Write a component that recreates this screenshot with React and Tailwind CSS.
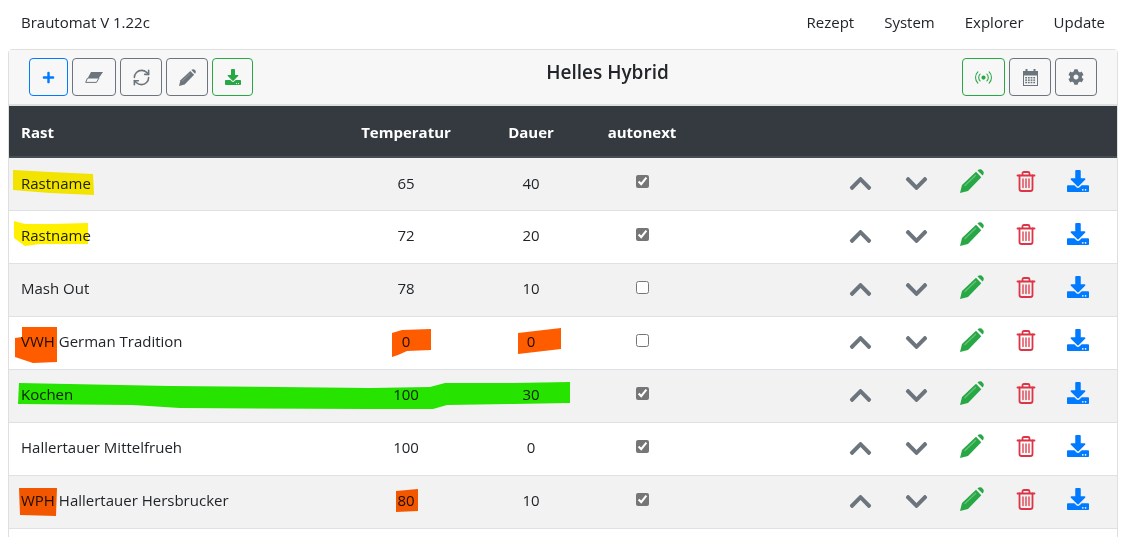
import { FaPlus, FaDownload, FaCog, FaChevronUp, FaChevronDown } from "react-icons/fa";
import { BsBroadcast } from "react-icons/bs";
import { RefreshCw } from "lucide-react";

const rows = [
	{ name: "Rastname", temp: 65, time: 40, auto: true },
	{ name: "Rastname", temp: 72, time: 20, auto: true },
	{ name: "Mash Out", temp: 78, time: 10, auto: false },
	{ name: "VWH German Tradition", temp: 0, time: 0, auto: false },
	{ name: "Kochen", temp: 100, time: 30, auto: true },
	{ name: "Hallertauer Mittelfrueh", temp: 100, time: 0, auto: true },
	{ name: "WPH Hallertauer Hersbrucker", temp: 80, time: 10, auto: true },
];

// marker scribbles somebody drew on top of the screenshot
const marks = [
	{ color: "#fff000", points: "13,170 50,172 93,174 94,195 50,193 13,190" },
	{ color: "#fff000", points: "14,221 25,224 50,224 88,223 88,244 40,244 25,246 14,238" },
	{ color: "#ff5c00", points: "22,327 57,327 57,362 33,363 15,357 15,338 22,337" },
	{ color: "#ff5c00", points: "392,333 402,330 431,329 431,350 407,351 398,355 392,357" },
	{ color: "#ff5c00", points: "518,333 561,328 561,349 518,354" },
	{ color: "#28f000", points: "19,383 170,386 370,388 430,387 445,383 513,383 570,382 570,403 513,404 447,405 433,409 370,409 180,408 133,405 18,404" },
	{ color: "#ff5c00", points: "19,488 57,488 56,516 20,515" },
	{ color: "#ff5c00", points: "396,491 418,489 418,511 396,512" },
];

const Pencil = ({ size }) => (
	<svg width={size} height={size} viewBox="0 0 24 24" fill="currentColor">
		<path d="M0 24 L2 16 L16 2.8 L21.3 8.2 L8 22 Z" />
		<path d="M17.5 1.5 Q19.5 -0.5 21.5 0.6 L23.2 2.2 Q24.5 4.2 22.6 6.6 Z" />
		<path d="M4.5 17 L16 6" stroke="#fff" strokeOpacity="0.3" strokeWidth="1.2" />
	</svg>
);

const Trash = () => (
	<svg width="20" height="21" viewBox="0 0 19 21" fill="none" stroke="currentColor" strokeWidth="1.8" strokeLinecap="round">
		<path d="M1 4.5 H18" />
		<path d="M6 4 V2.5 Q6 1 7.5 1 H11.5 Q13 1 13 2.5 V4" />
		<path d="M3 4.5 V18 Q3 20 5 20 H14 Q16 20 16 18 V4.5" />
		<path d="M6.5 8 V16.5 M9.5 8 V16.5 M12.5 8 V16.5" strokeWidth="1.3" />
	</svg>
);

const Eraser = () => (
	<svg width="18" height="11" viewBox="0 0 18 11">
		<path d="M6 0 H18 L13.5 6.5 H2.5 Z" fill="currentColor" />
		<path d="M2.5 6 L0.7 10.4 H11.5 L14 6" fill="none" stroke="currentColor" strokeWidth="1" />
	</svg>
);

const CalendarIcon = () => {
	const cells = [];
	for (let y = 8; y < 15; y += 2.4) {
		for (let x = 2.2; x < 12; x += 2.7) {
			cells.push(<rect key={`${x}-${y}`} x={x} y={y} width="1.8" height="1.5" fill="currentColor" />);
		}
	}
	return (
		<svg width="15" height="17" viewBox="0 0 15 17">
			<path d="M0 2 H2.5 V0 H4.5 V2 H10.5 V0 H12.5 V2 H15 V6.5 H0 Z" fill="currentColor" />
			<rect x="0.5" y="6" width="14" height="10.5" fill="#f7f7f7" stroke="currentColor" />
			{cells}
		</svg>
	);
};

const ToolButton = ({ className, children }) => (
	<button type="button" className={`flex items-center justify-center h-[38px] border rounded ${className}`}>
		{children}
	</button>
);

const Row = ({ row, index }) => (
	<tr className={`h-[53px] border-b border-[#dee2e6] ${index % 2 === 0 ? "bg-[#f2f2f2]" : "bg-white"}`}>
		<td className="pl-3 pb-[2px]">{row.name}</td>
		<td className="pb-[2px] text-center">{row.temp}</td>
		<td className="pb-[2px] text-center">{row.time}</td>
		<td>
			<input type="checkbox" defaultChecked={row.auto} className="block mx-auto mb-[5px] accent-[#767676]" />
		</td>
		<td />
		<td><div className="flex justify-center text-[#6c757d] text-[25px]"><FaChevronUp /></div></td>
		<td><div className="flex justify-center text-[#6c757d] text-[25px]"><FaChevronDown /></div></td>
		<td><div className="flex justify-center pb-[5px] text-[#28a745]"><Pencil size={24} /></div></td>
		<td><div className="flex justify-center pb-[4px] text-[#dc3545]"><Trash /></div></td>
		<td className="pr-3"><div className="flex justify-center pb-[6px] text-[#007bff] text-[22px]"><FaDownload /></div></td>
	</tr>
);

const App = () => {
	return (
		<div className="relative h-[537px] overflow-hidden bg-white text-[15px] text-[#212529] font-['Open_Sans',sans-serif]">
			<nav className="flex items-center justify-between h-[45px] pl-[21px] pr-[25px]">
				<span>Brautomat V 1.22c</span>
				<div className="flex gap-[30px]">
					<a>Rezept</a>
					<a>System</a>
					<a>Explorer</a>
					<a>Update</a>
				</div>
			</nav>

			<div className="mx-2 mt-1 w-[1110px] h-[600px] border border-[#dfdfdf] rounded-t">
				<div className="flex items-center h-[56px] px-5 bg-[#f7f7f7] border-b-2 border-[#dfdfdf]">
					<div className="flex gap-1 w-[389px]">
						<ToolButton className="w-[39px] border-[#007bff] text-[#007bff]"><FaPlus className="text-[13px]" /></ToolButton>
						<ToolButton className="w-[44px] border-[#6c757d] text-[#6c757d]"><Eraser /></ToolButton>
						<ToolButton className="w-[42px] border-[#6c757d] text-[#6c757d]"><RefreshCw size={19} strokeWidth={2} /></ToolButton>
						<ToolButton className="w-[42px] border-[#6c757d] text-[#6c757d]"><Pencil size={17} /></ToolButton>
						<ToolButton className="w-[41px] border-[#28a745] text-[#28a745]"><FaDownload className="text-[16px]" /></ToolButton>
					</div>
					<h1 className="flex-1 mb-2.5 text-center text-[19px] font-semibold">Helles Hybrid</h1>
					<div className="flex justify-end gap-1 w-[300px]">
						<ToolButton className="w-[43px] border-[#28a745] text-[#28a745]"><BsBroadcast className="text-[17px]" /></ToolButton>
						<ToolButton className="w-[42px] border-[#6c757d] text-[#6c757d]"><CalendarIcon /></ToolButton>
						<ToolButton className="w-[42px] border-[#6c757d] text-[#6c757d]"><FaCog className="text-[16px]" /></ToolButton>
					</div>
				</div>

				<table className="w-full table-fixed border-collapse">
					<colgroup>
						<col className="w-[339px]" />
						<col className="w-[116px]" />
						<col className="w-[134px]" />
						<col className="w-[88px]" />
						<col className="w-[146px]" />
						<col className="w-[56px]" />
						<col className="w-[56px]" />
						<col className="w-[56px]" />
						<col className="w-[51px]" />
						<col />
					</colgroup>
					<thead>
						<tr className="h-[51px] bg-[#343a40] text-white font-bold border-b-2 border-[#454d55]">
							<th className="pl-3 pt-[2px] text-left">Rast</th>
							<th className="pt-[2px]">Temperatur</th>
							<th className="pt-[2px]">Dauer</th>
							<th className="pt-[2px]">autonext</th>
							<th colSpan={6} />
						</tr>
					</thead>
					<tbody>
						{rows.map((row, index) => (
							<Row key={index} row={row} index={index} />
						))}
					</tbody>
				</table>
			</div>

			<svg className="absolute inset-0 pointer-events-none mix-blend-multiply" width="1130" height="537">
				{marks.map((mark, index) => (
					<polygon key={index} points={mark.points} fill={mark.color} />
				))}
			</svg>
		</div>
	);
};

export default App;
